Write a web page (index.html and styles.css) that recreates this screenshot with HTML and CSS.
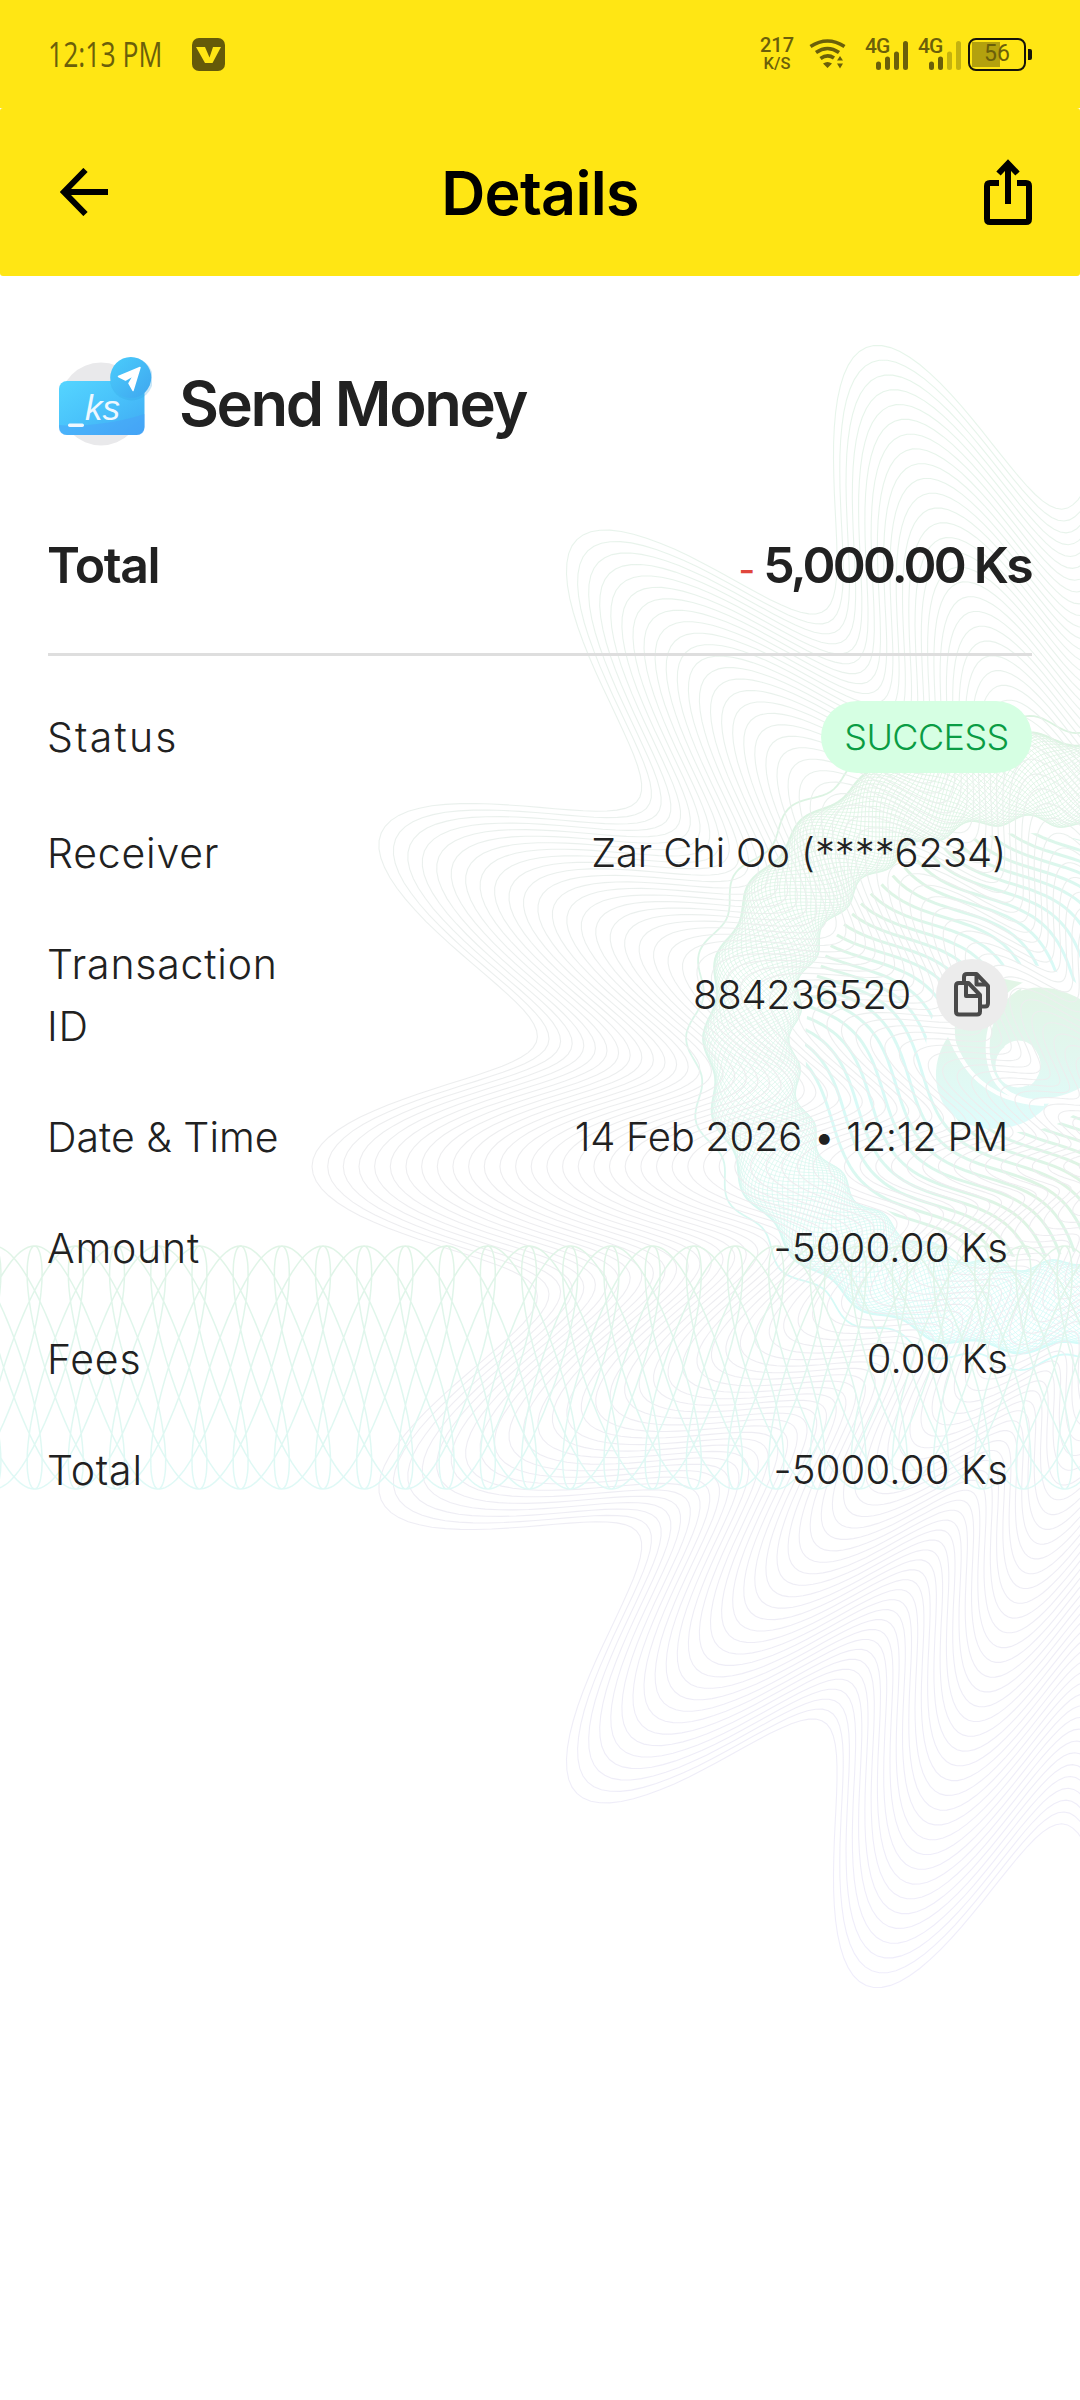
FILE: index.html
```html
<!DOCTYPE html>
<html lang="en">
<head>
<meta charset="utf-8">
<title>Details</title>
<link rel="stylesheet" href="styles.css">
</head>
<body>
<div class="screen">
  <svg class="guilloche" viewBox="0 0 1080 2400" aria-hidden="true">
    <defs>
      <linearGradient id="starInk" gradientUnits="userSpaceOnUse" x1="0" y1="340" x2="0" y2="1990">
        <stop offset="0" stop-color="#e6f5ea"/><stop offset=".5" stop-color="#ededef"/><stop offset="1" stop-color="#efedfb"/>
      </linearGradient>
      <linearGradient id="bandInk" gradientUnits="userSpaceOnUse" x1="0" y1="1246" x2="0" y2="1489">
        <stop offset="0" stop-color="#e0f4e6"/><stop offset="1" stop-color="#dff9f6"/>
      </linearGradient>
      <linearGradient id="ringInk" gradientUnits="userSpaceOnUse" x1="960" y1="740" x2="1060" y2="1340">
        <stop offset="0" stop-color="#dcf3e1"/><stop offset=".5" stop-color="#dcf6ec"/><stop offset="1" stop-color="#d4fbf9"/>
      </linearGradient>
      <linearGradient id="swirlInk" gradientUnits="userSpaceOnUse" x1="870" y1="880" x2="970" y2="1030" spreadMethod="reflect">
        <stop offset="0" stop-color="#dff4e3"/><stop offset="1" stop-color="#d9faf7"/>
      </linearGradient>
      <linearGradient id="eyeInk" gradientUnits="userSpaceOnUse" x1="0" y1="985" x2="0" y2="1125">
        <stop offset="0" stop-color="#e2f5e6"/><stop offset=".5" stop-color="#e2f7ef"/><stop offset="1" stop-color="#dffcfb"/>
      </linearGradient>
      <clipPath id="swirlClip"><path clip-rule="evenodd" d="M805,1045a220,212 0 1 0 440,0a220,212 0 1 0-440,0ZM926,1048a92,84 0 1 0 184,0a92,84 0 1 0-184,0Z"/></clipPath>
    </defs>
    <path id="swirl" class="swirl" clip-path="url(#swirlClip)"/>
    <g class="eye">
      <path d="M948,1037C930,1062 932,1100 955,1117C985,1138 1030,1130 1051,1101C1005,1106 967,1085 948,1037Z"/>
      <path d="M1024,983L990,976C952,990 945,1040 968,1070C985,1092 1005,1102 1040,1102L1000,1040Z"/>
      <path fill-rule="evenodd" d="M1080,999C1050,982 1020,984 1002,1003C986,1022 986,1060 1001,1080C1020,1104 1055,1102 1080,1088ZM997,1065a21.500,24.500 0 1 0 43,0a21.500,24.500 0 1 0-43,0Z"/>
      <path class="gap" d="M1030,982C990,996 980,1045 993,1075C1002,1096 1025,1104 1058,1101"/>
      <path class="gap" d="M950,1030C960,1070 988,1102 1044,1104"/>
      <circle class="pupil" cx="1018" cy="1065" r="22.500"/>
    </g>
    <path id="ring" class="ring"/>
    <path id="rim" class="rim"/>
    <path id="star" class="star"/>
    <path id="band" class="band"/>
  </svg>

  <div class="status-bar">
    <div class="status-left">
      <span class="clock">12:13 PM</span>
      <svg class="app-badge" width="33" height="33" viewBox="0 0 33 33"><rect width="33" height="33" rx="7"/><path d="M4,9H13L17.500,19.500L21,9H29L20.500,25H13Z"/></svg>
    </div>
    <div class="status-right">
      <div class="speed"><span class="speed-num">217</span><span class="speed-unit">K/S</span></div>
      <svg class="wifi" width="37" height="32" viewBox="0 0 37 32"><path class="arc" d="M1.500,8.500Q18.500,-2.500 35.500,8.500M7,14.500Q18.500,6.500 30,14.500M11.500,20.500Q18.500,15.500 25,20"/><path d="M14,25.500Q18.500,22.500 23,25.500L18.500,30ZM28,22.500L31,18L34,22.500ZM28,25.500H34L31,30.500Z"/></svg>
      <div class="signal first"><span>4G</span><svg width="32" height="29" viewBox="0 0 32 29"><path d="M2.500,23V26.500M11.500,18V26.500M20.500,13V26.500M29.500,2.500V26.500"/></svg></div>
      <div class="signal"><span>4G</span><svg width="32" height="29" viewBox="0 0 32 29"><path d="M2.500,23V26.500M11.500,18V26.500"/><path class="weak" d="M20.500,13V26.500M29.500,2.500V26.500"/></svg></div>
      <div class="battery"><span class="level">56</span></div>
    </div>
  </div>

  <header class="app-bar">
    <svg class="back" width="48" height="48" viewBox="0 0 48 48"><path d="M25.500,2L4,24L25.500,46M4,24H48"/></svg>
    <h1>Details</h1>
    <svg class="share" width="48" height="67" viewBox="0 0 48 67"><path class="box" d="M15,24H6Q3,24 3,27V60Q3,63 6,63H42Q45,63 45,60V27Q45,24 42,24H33"/><path class="arrow" d="M24,45V5M14.500,14.500L24,4.500L33.500,14.500"/></svg>
  </header>

  <main class="details">
    <div class="heading">
      <svg class="send-icon" width="96" height="96" viewBox="0 0 96 96">
        <defs>
          <linearGradient id="card" x1="0" y1="0" x2="1" y2="1"><stop offset="0" stop-color="#55d5ff"/><stop offset=".45" stop-color="#4ac4fb"/><stop offset="1" stop-color="#3fa9f3"/></linearGradient>
          <linearGradient id="disc" x1="0" y1="0" x2="1" y2="1"><stop offset="0" stop-color="#4acdfc"/><stop offset="1" stop-color="#3fa6ef"/></linearGradient>
        </defs>
        <circle cx="45" cy="48" r="41.500" fill="#e9e9eb"/>
        <rect x="3" y="25" width="85.500" height="54" rx="8" fill="url(#card)"/>
        <path d="M3,69C30,71 60,67 88.500,58V71Q88.500,79 80.500,79H11Q3,79 3,71Z" fill="#4a9cfb" opacity=".4"/>
        <rect x="12" y="67.500" width="16" height="3.500" rx="1.700" fill="#eef8ff"/>
        <text x="29" y="63.500" class="ks">ks</text>
        <circle cx="75.500" cy="23" r="21.500" fill="#2f9fe0" opacity=".25"/>
        <circle cx="74.800" cy="21.500" r="20.500" fill="url(#disc)"/>
        <path d="M62.500,20.500L84,11.500L77,34.500L73,27.500L78,19L69.500,24Z" fill="#fff" stroke="#fff" stroke-width="1.500" stroke-linejoin="round"/>
      </svg>
      <h2>Send Money</h2>
    </div>

    <div class="total">
      <span class="total-label">Total</span>
      <span class="total-value"><span class="minus">-</span><span class="sum">5,000.00 Ks</span></span>
    </div>

    <dl class="rows">
      <div class="row row-status"><dt>Status</dt><dd><span class="badge">SUCCESS</span></dd></div>
      <div class="row"><dt>Receiver</dt><dd class="receiver">Zar Chi Oo (****6234)</dd></div>
      <div class="row"><dt>Transaction ID</dt><dd class="txn"><span>884236520</span>
        <span class="copy"><svg width="38" height="47" viewBox="0 0 38 47"><path d="M11,11V6Q11,3 14,3H23.500L35,15V32Q35,35.500 32,35.500H28"/><path d="M23.500,3V13.500H34"/><path d="M6,12H15.500L27,24V40.500Q27,43.500 24,43.500H6Q3,43.500 3,40.500V15Q3,12 6,12Z"/><path d="M13,12V25H26"/></svg></span></dd></div>
      <div class="row row-date"><dt>Date &amp; Time</dt><dd class="date">14 Feb 2026&nbsp;•&nbsp;12:12 PM</dd></div>
      <div class="row"><dt>Amount</dt><dd class="amount">-5000.00 Ks</dd></div>
      <div class="row"><dt>Fees</dt><dd>0.00 Ks</dd></div>
      <div class="row"><dt>Total</dt><dd class="amount">-5000.00 Ks</dd></div>
    </dl>
  </main>
</div>
<script src="guilloche.js"></script>
</body>
</html>
```
FILE: styles.css
```css
* { box-sizing: border-box; margin: 0; padding: 0; }
body { background: #fff; font-family: Inter, "Noto Sans", sans-serif; color: #212121; }
.screen { position: relative; width: 1080px; height: 2400px; overflow: hidden; isolation: isolate; }
.guilloche { position: absolute; inset: 0; width: 1080px; height: 2400px; z-index: -1; }
.guilloche path { fill: none; }
.guilloche .star { stroke: url(#starInk); stroke-width: 1.1; }
.guilloche .band { stroke: url(#bandInk); stroke-width: 1.5; }
.guilloche .ring { stroke: url(#ringInk); stroke-width: .8; }
.guilloche .rim { stroke: url(#ringInk); stroke-width: 1.8; }
.guilloche .swirl { stroke: url(#swirlInk); stroke-width: 3; }
.guilloche .eye path { fill: url(#eyeInk); }
.guilloche .eye .gap { fill: none; stroke: #fff; stroke-width: 4; }
.guilloche .pupil { fill: #fff; }

.status-bar { display: flex; justify-content: space-between; height: 108px; padding: 0 48px; background: #ffe614; color: #6b5f0a; }
.status-left { display: flex; align-items: center; gap: 31px; }
.clock { width: 113px; font: 380 34px/40px "Open Sans", sans-serif; white-space: nowrap; transform: scaleX(.78); transform-origin: left; }
.app-badge rect { fill: #655a09; }
.app-badge path { fill: #ffe614; }
.status-right { display: flex; align-items: center; }
.speed { display: flex; flex-direction: column; align-items: center; width: 34px; margin-right: 15px; font-family: Roboto, sans-serif; font-weight: 500; }
.speed-num { font-size: 20px; line-height: 18px; }
.speed-unit { font-size: 16.5px; line-height: 19px; }
.wifi { margin-right: 19px; fill: #6b5f0a; }
.wifi .arc { fill: none; stroke: #6b5f0a; stroke-width: 3.600; }
.signal { position: relative; width: 43px; height: 32px; margin-right: 7px; font: 500 21px/16px Roboto, sans-serif; letter-spacing: -1px; }
.signal.first { margin-right: 10px; }
.signal svg { position: absolute; right: 0; bottom: 0; fill: none; stroke: #6b5f0a; stroke-width: 5; stroke-linecap: round; }
.signal .weak { stroke: #c4b20f; }
.battery { position: relative; width: 58px; height: 33px; margin-right: 6px; border: 2px solid #15130a; border-radius: 8px; background: linear-gradient(#b3a10e, #b3a10e) 2px 2px / 28px 25px no-repeat; display: flex; align-items: center; justify-content: center; }
.battery::after { content: ""; position: absolute; right: -8px; top: 9px; width: 4px; height: 11px; background: #15130a; border-radius: 0 2px 2px 0; }
.level { font: 400 23px/24px Roboto, sans-serif; }

.app-bar { display: flex; justify-content: space-between; align-items: center; height: 168px; padding: 0 48px 0 60px; background: #ffe614; color: #000; border-radius: 3px; }
.app-bar path { fill: none; stroke: #000; stroke-width: 6; }
h1 { padding: 2px 12px 0 0; font-size: 61px; font-weight: 560; line-height: 80px; letter-spacing: -.7px; }

.details { padding: 0 48px; }
.heading { display: flex; align-items: center; gap: 27px; height: 96px; margin-top: 80px; padding-left: 8px; }
.ks { font: italic 400 35px "Liberation Sans", sans-serif; fill: #eef8ff; }
h2 { font-size: 61.5px; font-weight: 560; line-height: 80px; letter-spacing: -2.4px; }
.total { display: flex; justify-content: space-between; align-items: center; height: 204px; padding-top: 25px; border-bottom: 3px solid #dedede; font-size: 50px; font-weight: 560; white-space: nowrap; }
.total-label { margin-left: -1px; letter-spacing: -1.4px; }
.total-value { margin-right: 1px; }
.sum { letter-spacing: -2.75px; }
.minus { color: #e0463c; font-size: 36px; font-weight: 500; margin-right: 8px; }
.rows { display: flex; flex-direction: column; gap: 48px; padding-top: 45px; font-size: 40px; font-weight: 340; line-height: 63px; }
.row { display: flex; justify-content: space-between; align-items: center; padding-right: 24px; }
.row-status { padding-right: 0; }
.row dt { width: 240px; margin-left: -1px; padding-top: 1px; font-size: 41px; line-height: 62px; letter-spacing: .8px; }
.row-status dt { padding-top: 0; letter-spacing: 2.2px; }
.row-date dt { letter-spacing: 0; }
.receiver { padding-right: 2px; letter-spacing: -.1px; }
.badge { display: block; width: 211px; height: 72px; border-radius: 36px; background: #d6ffe3; color: #0a9c44; font-size: 36px; line-height: 72px; letter-spacing: -.6px; text-align: center; }
.txn { display: flex; align-items: center; gap: 25px; letter-spacing: -.2px; }
.date { letter-spacing: -.3px; }
.amount { letter-spacing: .2px; }
.copy { display: flex; align-items: center; justify-content: center; width: 72px; height: 72px; border-radius: 50%; background: #ececec; }
.copy path { fill: none; stroke: #4a4a4a; stroke-width: 4; stroke-linejoin: round; }
```
FILE: guilloche.js
```js
// Security-print background: star contours, woven ring, swirl lines and the wave band.
const TAU = Math.PI * 2;

function polyline(points, close) {
  return 'M' + points.map(p => p[0].toFixed(1) + ',' + p[1].toFixed(1)).join('L') + (close ? 'Z' : '');
}

function polar(cx, cy, radius, steps, squash = 1) {
  const pts = [];
  for (let i = 0; i < steps; i++) {
    const a = TAU * i / steps;
    const r = radius(a);
    pts.push([cx - r * Math.cos(a), cy - r * Math.sin(a) * squash]);
  }
  return polyline(pts, true);
}

function draw(id, d) {
  document.getElementById(id).setAttribute('d', d);
}

// One contour of the star; the upper and lower arms lean slightly to the right.
function starContour(k) {
  const pts = [];
  for (let i = 0; i < 720; i++) {
    const a = TAU * i / 720;
    const r = 764 + 106 * Math.cos(16 * a);
    const x = -r * Math.cos(a);
    const y = -r * Math.sin(a);
    const lean = 18 * (y / 824) ** 2;
    const stretch = 0.98 + 0.039 * Math.min(1, Math.abs(y) / 600);
    pts.push([1182 + k * (x + lean), 1166.5 + k * y * stretch]);
  }
  return polyline(pts, true);
}

let star = '';
for (let i = 0; i < 54; i++) star += starContour(1 - 0.018 * i);
draw('star', star);

const bump = a => 5 * Math.cos(24 * a - 0.4);
let ring = '';
for (let i = 0; i < 42; i++) {
  ring += polar(1025, 1043, a => 274 + bump(a) + 43 * Math.cos(7 * a + TAU * i / 42), 480, 0.965);
}
draw('ring', ring);
draw('rim', polar(1025, 1043, a => 332 + 1.4 * bump(a), 480, 0.965) + polar(1025, 1043, a => 317 + bump(a), 480, 0.965));

let swirl = '';
for (let v0 = -260; v0 <= 260; v0 += 14) {
  const pts = [];
  const mid = -65 + 0.3 * (v0 + 130);
  for (let s = -260; s <= 260; s += 6) {
    const v = v0 - 22 * Math.sin(TAU * (s - mid) / 260);
    pts.push([1025 + (s + v) / Math.SQRT2, 1045 + (s - v) / Math.SQRT2]);
  }
  swirl += polyline(pts);
}
draw('swirl', swirl);

let band = '';
for (const flip of [1, -1]) {
  for (let copy = 0; copy < 4; copy++) {
    const pts = [];
    const x0 = 35 - 330 + copy * 41.2;
    for (let t = 0; t < 56; t += 0.06) {
      const x = x0 + 26.23 * t + 30.9 * Math.sin(t) - 6 * Math.sin(2 * t);
      pts.push([x, 1367.5 - flip * 121.5 * Math.cos(t)]);
    }
    band += polyline(pts);
  }
}
draw('band', band);
```
